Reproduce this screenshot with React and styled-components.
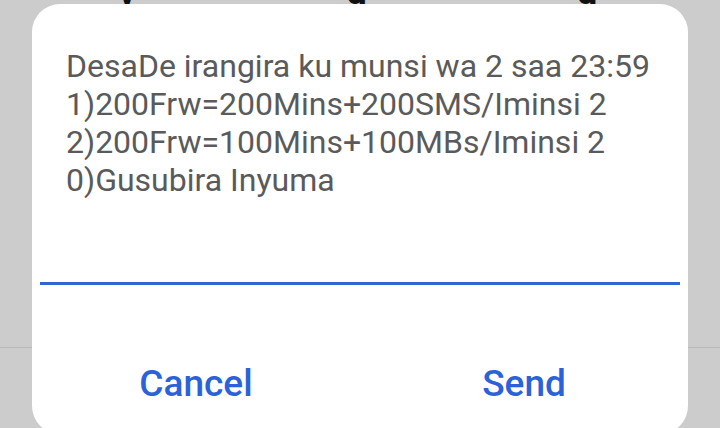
import React from 'react';
import styled, { createGlobalStyle } from 'styled-components';

const GlobalStyle = createGlobalStyle`
  html, body {
    margin: 0;
    padding: 0;
    background: #cccccc;
  }
  body {
    font-family: Roboto, "Noto Sans", "Liberation Sans", sans-serif;
  }
`;

const Backdrop = styled.div`
  width: 720px;
  height: 428px;
  overflow: hidden;
  background-color: #cccccc;
  background-image: linear-gradient(
    to bottom,
    transparent 347px,
    #b9b9b9 347px,
    #b9b9b9 348px,
    transparent 348px
  );
  display: flex;
  flex-direction: column;
`;

// bottoms of the page title letters peeking above the dialog
const TitleStrip = styled.div`
  height: 4px;
  overflow: hidden;
  display: flex;
  align-items: flex-end;
  flex-shrink: 0;
`;

const TitleText = styled.span`
  font-size: 36px;
  font-weight: 700;
  color: #111;
  line-height: 1;
  margin-left: ${(p) => p.offset}px;
  transform: translateY(6px);
`;

const Dialog = styled.section`
  flex-shrink: 0;
  margin: 0 32px;
  height: 430px;
  background: #ffffff;
  border-radius: 28px;
  display: flex;
  flex-direction: column;
`;

const Field = styled.div`
  margin: 0 8px;
  padding: 43px 26px 0;
  height: 281px;
  box-sizing: border-box;
  border-bottom: 3px solid #2f66d0;
`;

const Message = styled.p`
  margin: 0;
  font-size: 32px;
  line-height: 38px;
  color: #5a5a5a;
  white-space: pre-line;
`;

const Actions = styled.div`
  display: flex;
  padding-top: 77px;
`;

const ActionButton = styled.button`
  flex: 1;
  border: none;
  background: none;
  padding: 0;
  font-family: Roboto, "Noto Sans", "Liberation Sans", sans-serif;
  font-size: 37px;
  font-weight: 500;
  line-height: 44px;
  color: #2c62d9;
  cursor: pointer;
`;

const message = `DesaDe irangira ku munsi wa 2 saa 23:59
1)200Frw=200Mins+200SMS/Iminsi 2
2)200Frw=100Mins+100MBs/Iminsi 2
0)Gusubira Inyuma`;

export default function App() {
  return (
    <>
      <GlobalStyle />
      <Backdrop>
        <TitleStrip>
          <TitleText offset={118}>y</TitleText>
          <TitleText offset={210}>g</TitleText>
          <TitleText offset={210}>g</TitleText>
        </TitleStrip>
        <Dialog>
          <Field>
            <Message>{message}</Message>
          </Field>
          <Actions>
            <ActionButton>Cancel</ActionButton>
            <ActionButton>Send</ActionButton>
          </Actions>
        </Dialog>
      </Backdrop>
    </>
  );
}
